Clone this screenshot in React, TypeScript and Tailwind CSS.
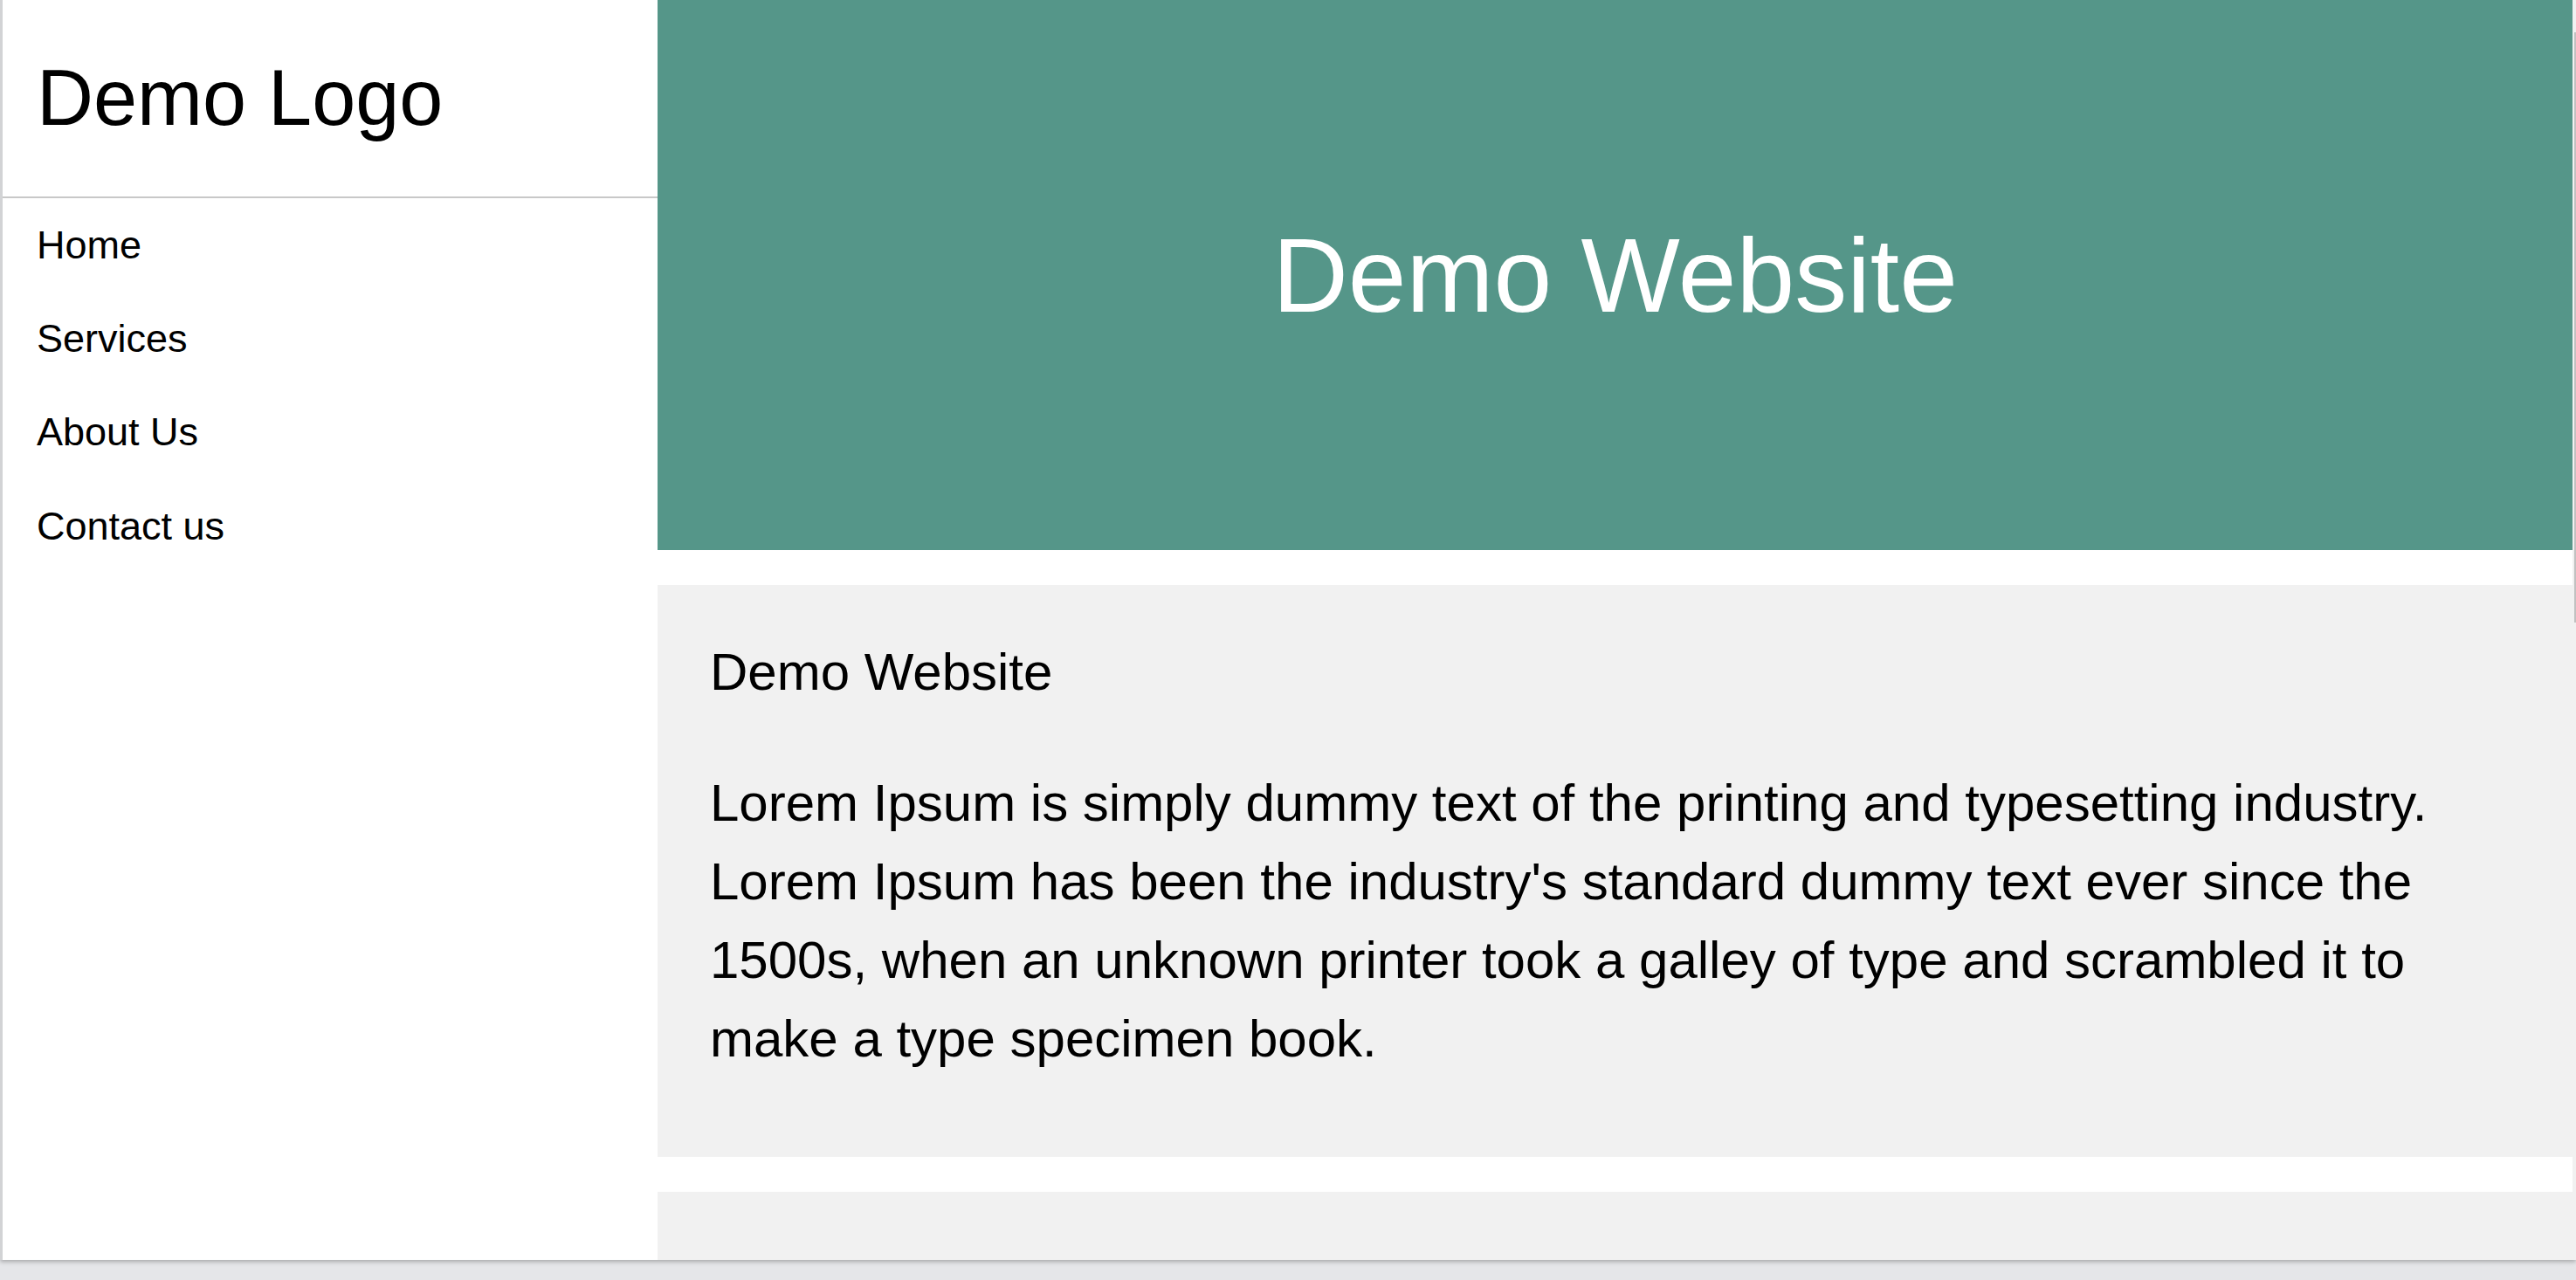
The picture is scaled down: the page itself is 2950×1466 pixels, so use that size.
const navItems = ["Home", "Services", "About Us", "Contact us"];

export default function App() {
  return (
    <div className="min-h-screen bg-[#e5e6e9] font-['Liberation_Sans',Arial,sans-serif] text-black">
      <div className="flex h-[1443px] overflow-hidden border-l-[3px] border-[#d2d3d5] bg-white shadow-[0_2px_5px_rgba(0,0,0,0.28)]">
        {/* sidebar */}
        <aside className="flex w-[750px] shrink-0 flex-col bg-white">
          <div className="flex h-[227px] items-center border-b-2 border-[#c8c8c8] px-[39px]">
            <span className="text-[90px]">Demo Logo</span>
          </div>
          <nav className="flex flex-col">
            {navItems.map((item) => (
              <a
                key={item}
                href="#"
                className="flex h-[107.3px] items-center px-[39px] text-[45px]"
              >
                {item}
              </a>
            ))}
          </nav>
        </aside>

        {/* main */}
        <main className="flex min-w-0 flex-1 flex-col gap-[40px] bg-white">
          <header className="flex h-[630px] shrink-0 items-center justify-center bg-[#559689]">
            <h1 className="text-[120px] text-white">Demo Website</h1>
          </header>

          <section className="shrink-0 bg-[#f1f1f1] px-[60px] pt-[55px] pb-[90px]">
            <h2 className="text-[60px] leading-[90px]">Demo Website</h2>
            <p className="mt-[60px] text-[60px] leading-[90px]">
              Lorem Ipsum is simply dummy text of the printing and typesetting
              industry. Lorem Ipsum has been the industry's standard dummy text
              ever since the 1500s, when an unknown printer took a galley of
              type and scrambled it to make a type specimen book.
            </p>
          </section>

          <section className="h-[600px] shrink-0 bg-[#f1f1f1]" />
        </main>

        {/* scrollbar */}
        <div className="flex w-[4px] shrink-0 flex-col bg-[#f1f1f1]">
          <div className="mt-[37px] ml-auto h-[676px] w-[2px] bg-[#c1c1c1]" />
        </div>
      </div>
    </div>
  );
}
